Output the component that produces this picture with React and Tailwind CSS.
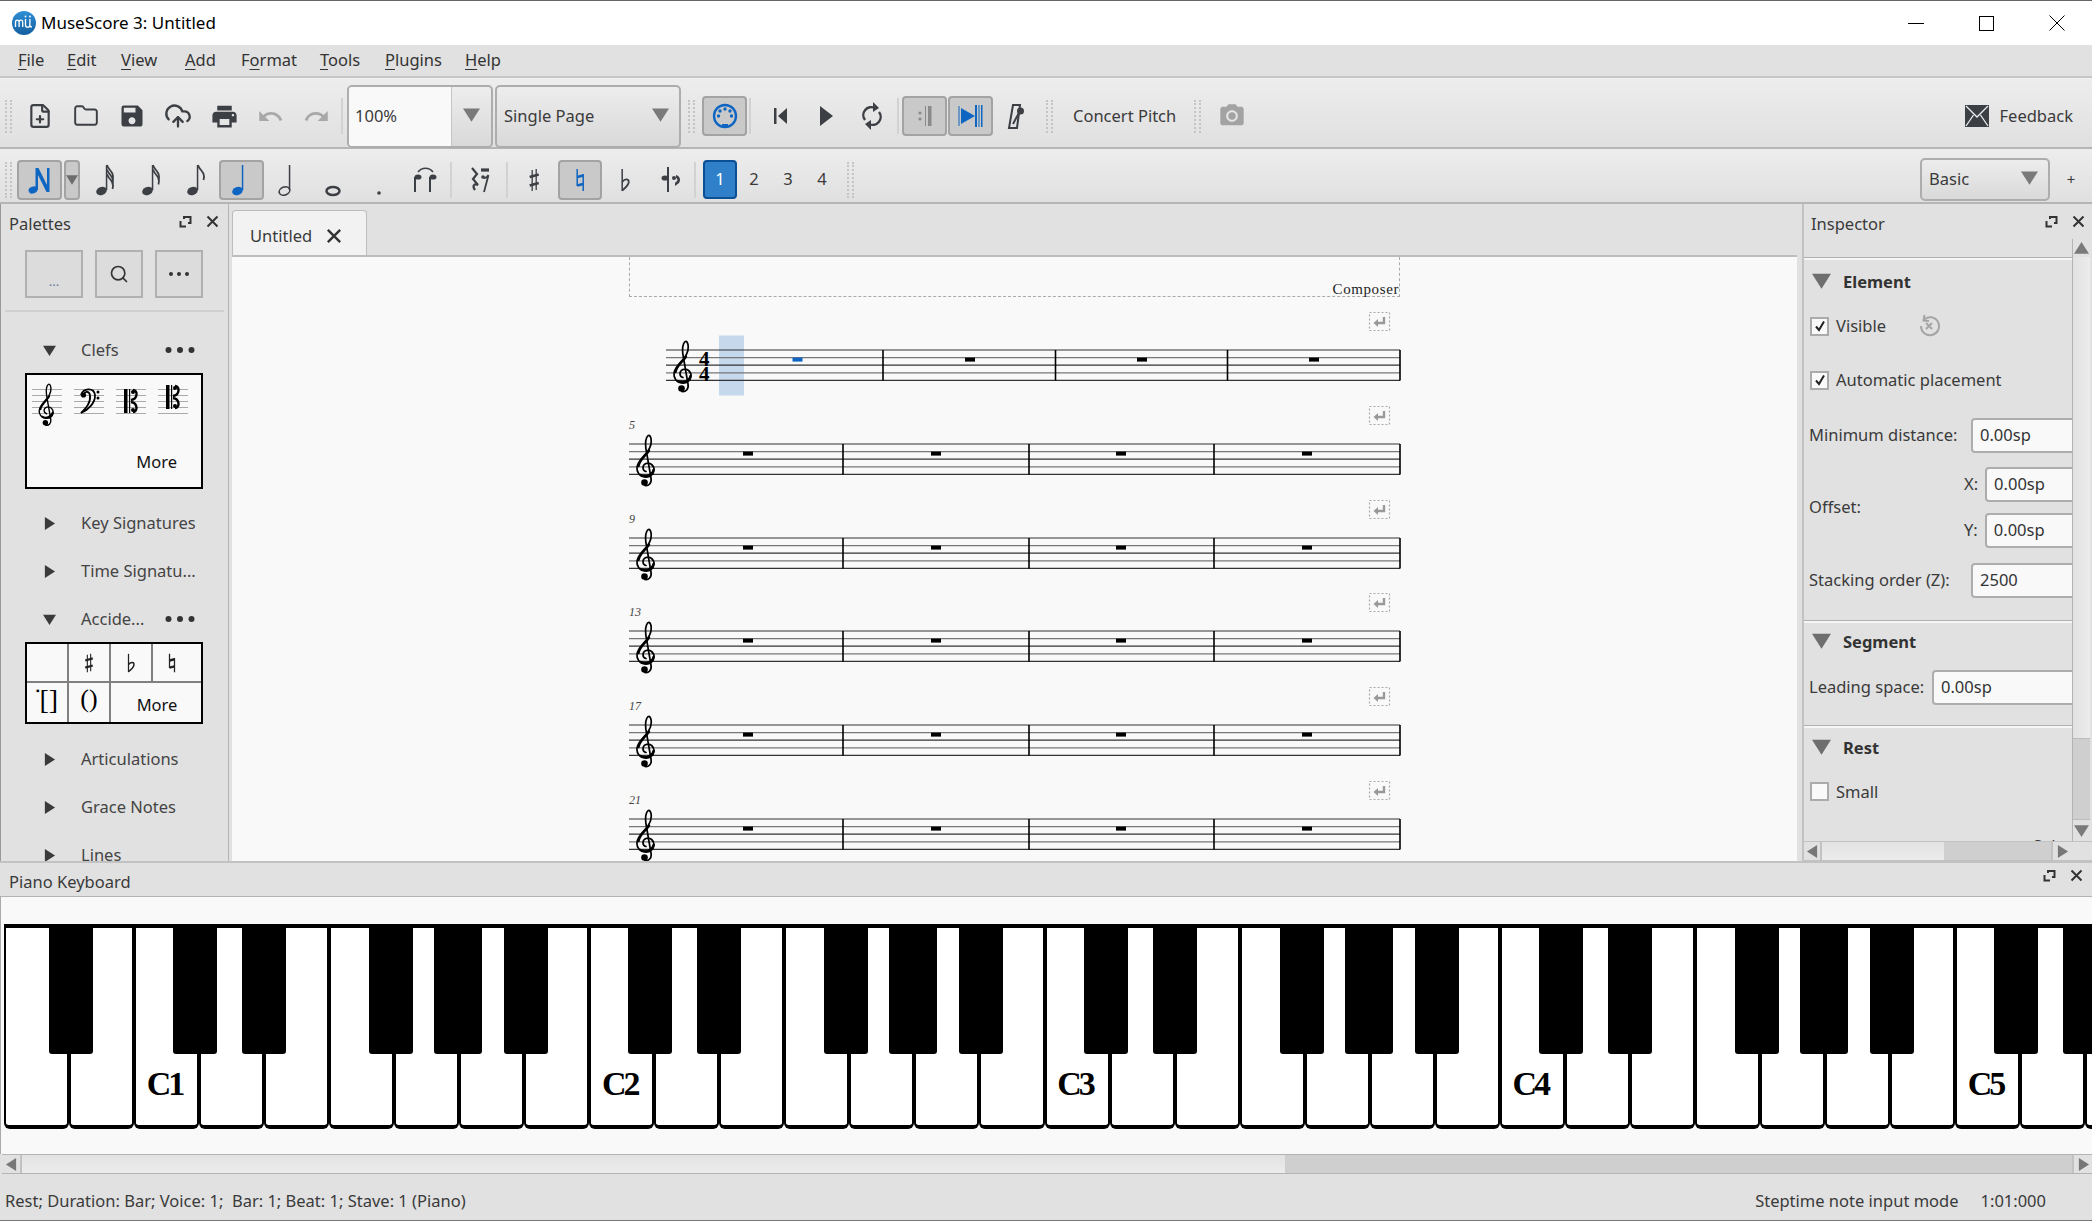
import React from 'react'
import { MdSave, MdPrint, MdUndo, MdRedo, MdPhotoCamera } from 'react-icons/md'
import { FilePlus, Folder, CloudUpload, Search } from 'lucide-react'

const DARK = '#3c3f44', BLUE = '#0f66c2'

// --- small drawings ---
function Float() {
  return <svg width="13" height="13" viewBox="0 0 13 13" fill="none" stroke="#333" strokeWidth="2"><path d="M5 4V2h6.500v6H9" /><path d="M1.500 6v5.500H7" /></svg>
}
function CloseX({ size = 13, w = 2 }) {
  return <svg width={size} height={size} viewBox="0 0 13 13" stroke="#333" strokeWidth={w}><path d="M1.500 1.500l10 10M11.500 1.500l-10 10" /></svg>
}
function Tri({ dir = 'down', size = 14, color = '#444' }) {
  const d = dir === 'down' ? 'M0 2h14L7 13z' : dir === 'right' ? 'M2 0l11 7-11 7z' : dir === 'left' ? 'M12 0L1 7l11 7z' : 'M0 12h14L7 1z'
  return <svg width={size} height={size} viewBox="0 0 14 14" fill={color}><path d={d} /></svg>
}
function Dots({ color = '#333' }) {
  return <svg width="30" height="8" viewBox="0 0 30 8" fill={color}><circle cx="3.500" cy="4" r="3" /><circle cx="15" cy="4" r="3" /><circle cx="26.500" cy="4" r="3" /></svg>
}
// treble clef, 20x53 box
function clefParts(x, y, s = 1, color = '#000') {
  return (
    <g transform={`translate(${x} ${y}) scale(${s})`} fill="none" stroke={color} strokeLinecap="round">
      <path strokeWidth="1.700" d="M10.500 37.500C6.500 36.500 6.500 31 10.500 29.500C15 28 19 32 18.500 36.500C18 41 14 43.500 9.500 43C4 42.500 1 38 1.500 33.500C2 27 9 22 12.500 17C15 13 16.500 9 15.500 4.500C14.500 .5 12.500 .5 11 4C9.500 8 10 13 11 18L15.500 44C16.500 49.500 13 52 9.500 51.500" />
      <path strokeWidth="2.400" d="M3 32C4 26 10 22 13.500 16.500M5 41C10 44 17 41 18 36" />
      <circle cx="9" cy="48.500" r="3.300" fill={color} stroke="none" />
    </g>
  )
}
function Staff5({ w = 30, gap = 6, y = 0, x = 0, color = '#aaa' }) {
  return [0, 1, 2, 3, 4].map(i => <line key={i} x1={x} x2={x + w} y1={y + i * gap + .5} y2={y + i * gap + .5} stroke={color} strokeWidth="1" />)
}
function MiniTreble() {
  return <svg width="30" height="44" viewBox="0 0 30 44"><Staff5 y={6} />{clefParts(6, 0, .82)}</svg>
}
function MiniBass() {
  return (
    <svg width="30" height="44" viewBox="0 0 30 44">
      <Staff5 y={6} />
      <path d="M7 12C9 5 20 4 21 12C21.500 20 14 27 7 30C12 25 17 20 16 12C15 8 11 8 10 11" fill="none" stroke="#000" strokeWidth="1.800" />
      <circle cx="9.500" cy="12" r="2.600" /><circle cx="24" cy="9" r="1.500" /><circle cx="24" cy="15" r="1.500" />
    </svg>
  )
}
function MiniAlto({ y = 6, top = 6 }) {
  return (
    <svg width="30" height="44" viewBox="0 0 30 44">
      <Staff5 y={y} />
      <rect x="8" y={top} width="3.500" height="24" /><rect x="13" y={top} width="1.200" height="24" />
      <path d={`M15 ${top + 11}C22 ${top + 10} 22 ${top + 1} 17 ${top + 1}M15 ${top + 13}C22 ${top + 14} 22 ${top + 23} 17 ${top + 23}`} fill="none" stroke="#000" strokeWidth="2.400" />
      <circle cx="17" cy={top + 3} r="2" /><circle cx="17" cy={top + 21} r="2" />
    </svg>
  )
}
function Sharp({ c = DARK, h = 24 }) {
  return <svg width={h * .6} height={h} viewBox="0 0 12 24" fill="none" stroke={c}><path strokeWidth="1.300" d="M4 2v21M8 1v21" /><path strokeWidth="2.800" d="M1.500 9L10.500 6.500M1.500 17.500L10.500 15" /></svg>
}
function Natural({ c = DARK, h = 24 }) {
  return <svg width={h * .6} height={h} viewBox="0 0 12 24" fill="none" stroke={c}><path strokeWidth="1.500" d="M3 1v17M9 6v17" /><path strokeWidth="2.800" d="M3 9L9 7.500M3 17.500L9 16" /></svg>
}
function Flat({ c = DARK, h = 24 }) {
  return <svg width={h * .6} height={h} viewBox="0 0 12 24" fill="none" stroke={c}><path strokeWidth="1.500" d="M3 1v22" /><path strokeWidth="1.800" d="M3 14C6 10 10 11 9.500 14.500C9 17.500 6 20 3 22.500" /></svg>
}
// flag count: 0 quarter, 1 eighth, 2 16th, 3 32nd
function Note({ flags = 0, c = DARK, hollow = false }) {
  return (
    <svg width="24" height="38" viewBox="0 0 24 38">
      <ellipse cx="7.500" cy="30" rx="5.500" ry="4" transform="rotate(-22 7.500 30)" fill={hollow ? 'none' : c} stroke={c} strokeWidth={hollow ? 1.600 : 0} />
      <rect x="11.800" y="4" width="1.500" height="25" fill={c} />
      {[...Array(flags)].map((_, i) => <path key={i} d={`M13 ${4 + i * 4.500}C14 ${9 + i * 4.500} 21 ${11 + i * 4.500} 18.500 ${19 + i * 4.500}`} fill="none" stroke={c} strokeWidth="1.800" />)}
    </svg>
  )
}
function Grip({ h = 'h-[33px]' }) {
  return <div className={`w-[7px] border-x-2 border-dotted border-[#c4c4c4] ${h}`} />
}
function Sep() {
  return <div className="w-[2px] h-[36px] bg-[#d2d2d2] mx-[2px]" />
}
function Slot({ children, className = 'w-[46px]' }) {
  return <div className={`flex items-center justify-center shrink-0 ${className}`}>{children}</div>
}
function Toggle({ children, className = 'w-[45px]' }) {
  return <div className={`flex items-center justify-center shrink-0 h-[40px] bg-[#c9c9c9] border-2 border-[#a3a3a3] rounded-[4px] ${className}`}>{children}</div>
}
function Combo({ label, className }) {
  return (
    <div className={`flex items-center h-[63px] border-2 border-[#adadad] rounded-[5px] bg-linear-to-b from-[#ededed] to-[#d9d9d9] ${className}`}>
      <span className="flex-1 pl-[7px] text-[#3a3a3a]">{label}</span>
      <span className="mr-[10px] mb-[4px]"><Tri size={17} color="#7a7a7a" /></span>
    </div>
  )
}

// --- score ---
function StaffSystem({ x = 0, bars, rests, num, first }) {
  const y = 40, g = 7.600
  return (
    <svg width="771" height="93.750" viewBox="0 0 771 93.750" className="block overflow-visible shrink-0">
      {first && <rect x="90" y={y - 14.500} width="25" height="60" fill="#c6d9ec" />}
      {[0, 1, 2, 3, 4].map(i => <line key={i} x1={x} x2="771" y1={y + i * g} y2={y + i * g} stroke={i % 2 ? '#777' : '#333'} strokeWidth="1.200" />)}
      {bars.map(b => <line key={b} x1={b} x2={b} y1={y} y2={y + 4 * g} stroke="#000" strokeWidth="1.600" />)}
      {rests.map((r, i) => <rect key={r} x={r - 5} y={y + g} width="10" height="4" fill={first && i === 0 ? BLUE : '#000'} />)}
      {clefParts(x + 6.500, y - 10, 1)}
      {first && <>
        <text x={70} y={y + 16} fontSize="21" className="font-['Liberation_Serif'] font-bold">4</text>
        <text x={70} y={y + 31} fontSize="21" className="font-['Liberation_Serif'] font-bold">4</text>
      </>}
      {num && <text x="0" y={y - 15} fontSize="12" fill="#444" className="font-['Liberation_Serif'] italic">{num}</text>}
      <g transform="translate(740 2)" fill="none">
        <rect x=".5" y=".5" width="20" height="18" stroke="#aaa" strokeWidth="1.200" strokeDasharray="2 2" />
        <path d="M15 5v6H7.500" stroke="#999" strokeWidth="2.400" />
        <path d="M9 7L4.500 11L9 15z" fill="#999" />
      </g>
    </svg>
  )
}

function Score() {
  const rest = { bars: [214, 400, 585, 771], rests: [119, 307, 492, 678] }
  return (
    <div className="flex-1 min-h-0 overflow-hidden bg-[#f9f9f9] pl-[397px]">
      <div className="w-[771px] h-[40px] border-x border-b border-dashed border-[#aaa] flex items-end justify-end font-['Liberation_Serif'] text-[15px] leading-[15px] tracking-[.6px] text-[#222]">
        <span className="-mb-[1px]">Composer</span>
      </div>
      <div className="mt-[13px] flex flex-col">
        <StaffSystem first x={37} bars={[254, 426.500, 598.500, 771]} rests={[168.500, 341, 513, 685]} />
        {['5', '9', '13', '17', '21'].map(n => <StaffSystem key={n} num={n} {...rest} />)}
      </div>
    </div>
  )
}

// --- palettes ---
function PalRow({ label, open, dots, children }) {
  return (
    <>
      <div className="flex items-center h-[48px] shrink-0 pl-[42px]">
        <span className="w-[38px] shrink-0"><Tri dir={open ? 'down' : 'right'} size={13} color="#3a3a3a" /></span>
        <span className={`text-[#444] whitespace-nowrap ${dots ? 'w-[84px]' : ''}`}>{label}</span>
        {dots && <Dots />}
      </div>
      {children}
    </>
  )
}
function Palettes() {
  const cell = 'flex items-center justify-center border-[#808080]'
  return (
    <div className="w-[229px] shrink-0 flex flex-col overflow-hidden border-x border-l-[#999] border-r-[#b4b4b4]">
      <div className="flex items-center justify-between h-[46px] pl-[8px] pr-[9px] pb-[5px] shrink-0">
        <span className="text-[#3a3a3a]">Palettes</span>
        <div className="flex items-center gap-[14px] mb-[6px]"><Float /><CloseX /></div>
      </div>
      <div className="flex pl-[24px] gap-[12px] shrink-0">
        <div className="w-[58px] h-[48px] border-2 border-[#b0b0b0] bg-[#dcdcdc] flex items-end justify-center text-[#66799a] text-[13px] pb-[8px] leading-none">...</div>
        <div className="w-[48px] h-[48px] border-2 border-[#b0b0b0] bg-[#dcdcdc] flex items-center justify-center"><Search size={20} color="#333" strokeWidth={2} /></div>
        <div className="w-[48px] h-[48px] border-2 border-[#b0b0b0] bg-[#dcdcdc] flex items-center justify-center"><svg width="22" height="6" fill="#333"><circle cx="3" cy="3" r="2" /><circle cx="11" cy="3" r="2" /><circle cx="19" cy="3" r="2" /></svg></div>
      </div>
      <div className="h-[2px] bg-[#cfcfcf] mx-[4px] mt-[12px] shrink-0" />
      <div className="mt-[14px]" />
      <PalRow label="Clefs" open dots>
        <div className="ml-[24px] w-[178px] h-[116px] -mt-[1px] border-2 border-black bg-[#f9f9f9] flex flex-col shrink-0">
          <div className="flex pl-[5px] gap-[12px] pt-[8px]"><MiniTreble /><MiniBass /><MiniAlto /><MiniAlto y={6} top={2} /></div>
          <div className="mt-[24px] text-right pr-[24px] text-[#111] leading-[22px]">More</div>
        </div>
      </PalRow>
      <div className="h-[10px] shrink-0" />
      <PalRow label="Key Signatures" />
      <PalRow label="Time Signatu..." />
      <PalRow label="Accide..." open dots>
        <div className="ml-[24px] w-[178px] h-[82px] -mt-[1px] border-2 border-black bg-[#f9f9f9] grid grid-cols-[42px_42px_42px_1fr] grid-rows-2 shrink-0">
          <div className={`${cell} border-r-2 border-b-2`} />
          <div className={`${cell} border-r-2 border-b-2`}><Sharp c="#222" h={20} /></div>
          <div className={`${cell} border-r-2 border-b-2`}><Flat c="#222" h={20} /></div>
          <div className={`${cell} border-b-2 pr-[10px]`}><Natural c="#222" h={20} /></div>
          <div className={`${cell} border-r-2 font-['Liberation_Serif'] text-[28px] leading-none text-black pb-[6px]`}><span className="text-[10px] self-start mt-[3px]">▪</span>[]</div>
          <div className={`${cell} border-r-2 font-['Liberation_Serif'] text-[26px] leading-none text-black pb-[8px]`}>()</div>
          <div className="col-span-2 flex items-center justify-center text-[#111] pl-[2px] pt-[5px]">More</div>
        </div>
      </PalRow>
      <div className="h-[11px] shrink-0" />
      <PalRow label="Articulations" />
      <PalRow label="Grace Notes" />
      <PalRow label="Lines" />
    </div>
  )
}

// --- inspector ---
function Check({ on, label }) {
  return (
    <div className="flex items-center gap-[7px] pl-[6px]">
      <div className="w-[19px] h-[19px] border-2 border-[#ababab] bg-[#f9f9f9] flex items-center justify-center">
        {on && <svg width="12" height="12" viewBox="0 0 12 12" fill="none" stroke="#222" strokeWidth="2"><path d="M2 6.500l3 3.500 5-8.500" /></svg>}
      </div>
      <span className="text-[#3a3a3a]">{label}</span>
    </div>
  )
}
function Field({ value, className = '' }) {
  return <div className={`h-[35px] shrink-0 border-2 border-[#adadad] rounded-[4px] bg-[#f9f9f9] flex items-center pl-[7px] text-[#333] ${className}`}>{value}</div>
}
function SectionHead({ label }) {
  return (
    <div className="flex items-center pl-[8px] h-[44px] shrink-0">
      <span className="w-[31px] mb-[4px]"><Tri size={19} color="#6e6e6e" /></span>
      <span className="font-bold text-[#333]">{label}</span>
    </div>
  )
}
function SecLine() {
  return <div className="h-[3px] shrink-0 border-t border-[#b0b0b0] bg-[#f5f5f5]" />
}
function Inspector() {
  return (
    <div className="w-[290px] shrink-0 flex flex-col overflow-hidden border-l-2 border-[#c2c2c2]">
      <div className="flex items-center justify-between h-[35px] pl-[7px] pr-[7px] shrink-0">
        <span className="text-[#3a3a3a] mt-[5px]">Inspector</span>
        <div className="flex items-center gap-[14px]"><Float /><CloseX /></div>
      </div>
      <div className="flex flex-1 min-h-0">
        <div className="flex-1 min-w-0 flex flex-col overflow-hidden">
          <div className="h-[18px] shrink-0" />
          <SecLine />
          <SectionHead label="Element" />
          <div className="mt-[10px] relative"><Check on label="Visible" />
            <svg className="absolute left-[113px] top-[0px]" width="24" height="24" viewBox="0 0 24 24" fill="none" stroke="#a5a5a5" strokeWidth="2"><path d="M7 5.500A9 9 0 1 1 4 12" /><path d="M7.500 1L6.500 6.500L12 7" /><path d="M9 9l6 6M15 9l-6 6" /></svg>
          </div>
          <div className="mt-[29px]"><Check on label="Automatic placement" /></div>
          <div className="flex items-center mt-[25px] pl-[5px] text-[#3a3a3a]"><span className="w-[162px] shrink-0">Minimum distance:</span><Field value="0.00sp" className="w-[120px]" /></div>
          <div className="flex items-center mt-[14px] pl-[5px] text-[#3a3a3a]">
            <span className="w-[155px] shrink-0">Offset:</span>
            <div className="flex flex-col gap-[11px]">
              <div className="flex items-center gap-[7px]"><span>X:</span><Field value="0.00sp" className="w-[110px] h-[34px]" /></div>
              <div className="flex items-center gap-[7px]"><span>Y:</span><Field value="0.00sp" className="w-[110px] h-[34px]" /></div>
            </div>
          </div>
          <div className="flex items-center mt-[15px] pl-[5px] text-[#3a3a3a]"><span className="w-[162px] shrink-0">Stacking order (Z):</span><Field value="2500" className="w-[120px]" /></div>
          <div className="h-[22px] shrink-0" />
          <SecLine />
          <div className="-mt-[2px]"><SectionHead label="Segment" /></div>
          <div className="flex items-center mt-[5px] pl-[5px] text-[#3a3a3a]"><span className="w-[123px] shrink-0">Leading space:</span><Field value="0.00sp" className="w-[160px]" /></div>
          <div className="h-[20px] shrink-0" />
          <SecLine />
          <div className="-mt-[1px]"><SectionHead label="Rest" /></div>
          <div className="mt-[9px]"><Check label="Small" /></div>
          <div className="mt-[30px] pl-[229px] text-[#3a3a3a] whitespace-nowrap">Select</div>
        </div>
        <div className="w-[18px] mr-[2px] shrink-0 flex flex-col border-l border-[#b4b4b4]">
          <div className="h-[18px] flex items-center justify-center shrink-0"><Tri dir="up" size={15} color="#7a7a7a" /></div>
          <div className="flex-1 bg-linear-to-r from-[#e2e2e2] to-[#ececec]" />
          <div className="h-[82px] bg-[#cfcfcf] border-y border-[#bcbcbc] shrink-0" />
          <div className="h-[21px] flex items-center justify-center shrink-0"><Tri size={15} color="#7a7a7a" /></div>
        </div>
      </div>
      <div className="flex h-[20px] shrink-0 border-y border-[#c2c2c2]">
        <div className="w-[18px] flex items-center justify-center border-r-2 border-[#c2c2c2]"><Tri dir="left" size={13} color="#777" /></div>
        <div className="w-[122px] bg-linear-to-b from-[#e2e2e2] to-[#ececec]" />
        <div className="w-[107px] bg-[#cfcfcf]" />
        <div className="w-[21px] flex items-center justify-center border-l-2 border-[#c2c2c2]"><Tri dir="right" size={13} color="#777" /></div>
      </div>
    </div>
  )
}

// --- keyboard ---
const KEY_W = 65.040
const OCT = [[41, 44], [110, 44], [237, 44], [302, 48], [372, 44]]
function Keyboard() {
  const blacks = []
  for (let o = -1; o < 5; o++) for (const [l, w] of OCT) blacks.push({ left: 128 + o * 7 * KEY_W + l, width: w })
  return (
    <div className="h-[258px] shrink-0 bg-[#f9f9f9] border-t border-[#b4b4b4] pt-[27px] pl-[3px] overflow-hidden border-l border-l-[#aaa]">
      <div className="relative flex h-[205px] w-[2152px] border-t-4 border-black">
        {[...Array(33)].map((_, i) => (
          <div key={i} className="w-[65.04px] shrink-0 bg-white border-x-2 border-b-4 border-black rounded-b-[6px] flex items-end justify-center pb-[24px] pr-[4px]">
            {(i - 2) % 7 === 0 && <span className="font-['Liberation_Serif'] font-bold text-[34px] leading-none tracking-[-3px] text-black">C{(i - 2) / 7 + 1}</span>}
          </div>
        ))}
        {blacks.filter(b => b.left > 0 && b.left < 2090).map(b => (
          <div key={b.left} className="absolute -top-[1px] h-[127px] bg-black rounded-b-[3px]" style={{ left: b.left, width: b.width }} />
        ))}
      </div>
    </div>
  )
}

// --- page ---
export default function App() {
  const menu = [['', 'F', 'ile', 'w-[49px]'], ['', 'E', 'dit', 'w-[54px]'], ['', 'V', 'iew', 'w-[64px]'], ['', 'A', 'dd', 'w-[56px]'], ['F', 'o', 'rmat', 'w-[79px]'], ['', 'T', 'ools', 'w-[65px]'], ['', 'P', 'lugins', 'w-[80px]'], ['', 'H', 'elp', 'w-[40px]']]
  return (
    <div className="w-[2092px] h-[1221px] flex flex-col overflow-hidden bg-[#e1e1e1] text-[16.5px] font-['Noto_Sans','Open_Sans',sans-serif] border-t border-[#666]">
      {/* title */}
      <div className="h-[44px] shrink-0 bg-white flex items-center pl-[12px]">
        <svg width="24" height="24" viewBox="0 0 24 24" className="mr-[5px]">
          <defs><linearGradient id="lg" x1="0" y1="0" x2="0" y2="1"><stop offset="0" stopColor="#2f8fd6" /><stop offset="1" stopColor="#155f9f" /></linearGradient></defs>
          <circle cx="12" cy="12" r="12" fill="url(#lg)" />
          <path d="M3.500 16v-5a1.800 1.800 0 0 1 3.600 0v5M7.100 11a1.800 1.800 0 0 1 3.600 0v5M13.500 8v6a2.200 2.200 0 0 0 4.400 0V8M17.900 14c0 1.500 .8 2 2 2" fill="none" stroke="#fff" strokeWidth="1.300" />
          <circle cx="13.500" cy="5.500" r=".9" fill="#fff" /><circle cx="18" cy="5.500" r=".9" fill="#fff" />
        </svg>
        <span className="text-[17px] text-black">MuseScore 3: Untitled</span>
        <div className="ml-auto flex items-center">
          <div className="w-[69px] flex justify-center"><div className="w-[16px] h-px bg-black" /></div>
          <div className="w-[72px] flex justify-center"><div className="w-[15px] h-[15px] border border-black" /></div>
          <div className="w-[70px] flex justify-center"><svg width="16" height="16" stroke="#000"><path d="M.5.5l15 15M15.500 .5l-15 15" /></svg></div>
        </div>
      </div>
      {/* menu */}
      <div className="h-[33px] shrink-0 flex items-center pl-[18px] border-b-2 border-[#c6c6c6] text-[#333]">
        {menu.map(([a, u, b, w]) => <span key={u + b} className={`shrink-0 ${w} pr-0`}>{a}<span className="underline underline-offset-3">{u}</span>{b}</span>)}
      </div>
      {/* toolbar 1 */}
      <div className="h-[71px] shrink-0 flex items-center pl-[5px] pt-[6px] bg-linear-to-b from-[#ededed] to-[#e0e0e0] border-b-2 border-[#b5b5b5] border-t border-t-[#f0f0f0] text-[#3a3a3a]">
        <Grip /><div className="w-[5px]" />
        <Slot><FilePlus size={26} color={DARK} strokeWidth={2} /></Slot>
        <Slot><Folder size={26} color={DARK} strokeWidth={1.800} /></Slot>
        <Slot><MdSave size={28} color={DARK} /></Slot>
        <Slot><CloudUpload size={28} color={DARK} strokeWidth={2} /></Slot>
        <Slot><MdPrint size={29} color={DARK} /></Slot>
        <Slot><MdUndo size={27} color="#a8a8a8" /></Slot>
        <Slot><MdRedo size={27} color="#a8a8a8" /></Slot>
        <Sep />
        <div className="flex items-center h-[63px] w-[146px] ml-[2px] border-2 border-[#adadad] rounded-[5px] overflow-hidden bg-linear-to-b from-[#ededed] to-[#d9d9d9] shrink-0">
          <div className="w-[103px] h-full bg-[#f9f9f9] flex items-center pl-[6px] border-r border-[#c6c6c6]">100%</div>
          <div className="flex-1 flex justify-center mb-[4px]"><Tri size={17} color="#7a7a7a" /></div>
        </div>
        <Combo label="Single Page" className="w-[186px] ml-[2px] shrink-0" />
        <div className="w-[7px]" /><Grip /><div className="w-[7px]" />
        <Toggle>
          <svg width="26" height="26" viewBox="0 0 26 26" fill="none"><circle cx="13" cy="13" r="11" stroke={BLUE} strokeWidth="2.400" /><path d="M10 24v-3h6v3z" fill={BLUE} />{[[6.500, 13], [19.500, 13], [8, 8], [18, 8], [13, 6]].map(([x, y]) => <circle key={x} cx={x} cy={y} r="1.700" fill={BLUE} />)}</svg>
        </Toggle>
        <Sep />
        <Slot className="w-[46px] ml-[4px]"><svg width="13" height="16" fill={DARK}><rect y="0" width="2.500" height="16" /><path d="M13 0v16L4 8z" /></svg></Slot>
        <Slot><svg width="14" height="20" fill={DARK}><path d="M1 0l13 10L1 20z" /></svg></Slot>
        <Slot><svg width="20" height="30" viewBox="0 0 20 30" fill="none" stroke={DARK} strokeWidth="2.400"><path d="M3 19A8 8 0 0 1 13 7M17 11A8 8 0 0 1 7 23" /><path d="M11 1l6 6-6 4z" fill={DARK} stroke="none" /><path d="M9 29l-6-6 6-4z" fill={DARK} stroke="none" /></svg></Slot>
        <div className="w-[2px] h-[36px] bg-[#d2d2d2] ml-[2px] mr-[3px]" />
        <Toggle><svg width="14" height="22" fill="#8a8a8a"><circle cx="2" cy="8" r="1.600" /><circle cx="2" cy="14" r="1.600" /><rect x="7" y="1" width="1" height="20" /><rect x="10" y="1" width="3.500" height="20" /></svg></Toggle>
        <Toggle className="w-[45px] ml-[1px]"><svg width="26" height="26" fill={BLUE}><path d="M3 5l14 8-14 8z" /><rect x="17" y="2" width="2" height="22" /><rect x="20.500" y="2" width="1" height="22" /><rect x="23" y="2" width="1.500" height="22" /><rect x=".5" y="3" width="1" height="20" /></svg></Toggle>
        <Slot><svg width="18" height="26" viewBox="0 0 18 26" fill="none" stroke={DARK} strokeWidth="2"><path d="M6 2h7l-3 23H2z" /><path d="M6 21L13 8" /><circle cx="13.500" cy="8" r="2.500" fill={DARK} /></svg></Slot>
        <div className="w-[7px]" /><Grip /><div className="w-[20px]" />
        <span className="w-[104px] shrink-0 whitespace-nowrap">Concert Pitch</span>
        <div className="w-[17px]" /><Grip /><div className="w-[8px]" />
        <Slot><MdPhotoCamera size={28} color="#a3a3a3" /></Slot>
        <div className="ml-auto flex items-center pr-[19px] gap-[11px]">
          <svg width="24" height="22" viewBox="0 0 24 22"><rect y="0" width="24" height="22" fill={DARK} /><path d="M1 1l11 11L23 1M1 21l7.500-11M23 21l-7.500-11" fill="none" stroke="#eee" strokeWidth="1.300" /></svg>
          <span>Feedback</span>
        </div>
      </div>
      {/* toolbar 2 */}
      <div className="h-[55px] shrink-0 flex items-center pl-[5px] pt-[8px] bg-linear-to-b from-[#ededed] to-[#e0e0e0] border-b-2 border-[#b5b5b5] text-[#3a3a3a]">
        <Grip h="h-[36px]" /><div className="w-[5px]" />
        <Toggle className="w-[45px]"><svg width="24" height="30" viewBox="0 0 24 30" fill={BLUE}><ellipse cx="5" cy="25" rx="4.500" ry="3.500" transform="rotate(-20 5 25)" /><path d="M7.500 25V3h3L19 20V3h2.500v24h-3L10 10v15z" /></svg></Toggle>
        <div className="w-[16px] h-[40px] ml-[2px] mr-[3px] bg-[#c9c9c9] border-2 border-[#a3a3a3] rounded-[4px] flex items-center justify-center shrink-0"><Tri size={15} color="#6e6e6e" /></div>
        <Slot><Note flags={3} /></Slot>
        <Slot><Note flags={2} /></Slot>
        <Slot className="w-[44px]"><Note flags={1} /></Slot>
        <Toggle><Note c={BLUE} /></Toggle>
        <Slot className="w-[46px] pl-[4px]"><Note hollow /></Slot>
        <Slot><svg width="20" height="38"><ellipse cx="10" cy="30" rx="6.500" ry="4" fill="none" stroke={DARK} strokeWidth="2.500" /></svg></Slot>
        <Slot><svg width="6" height="38"><circle cx="3" cy="32" r="1.800" fill={DARK} /></svg></Slot>
        <Slot><svg width="28" height="28" viewBox="0 0 28 28" fill="none"><path d="M7 6C11 1 18 1 22 6" stroke={DARK} strokeWidth="1.600" /><path d="M4 11v15M19 11v15" stroke={DARK} strokeWidth="2" /><ellipse cx="7" cy="11" rx="3.500" ry="2.600" fill={DARK} /><ellipse cx="22" cy="11" rx="3.500" ry="2.600" fill={DARK} /></svg></Slot>
        <Sep />
        <Slot className="w-[50px]"><svg width="22" height="26" viewBox="0 0 22 26" fill="none" stroke={DARK}><path d="M4 1l5 6-4 5 5 6c-4-2-6 1-3 5" strokeWidth="2.200" /><path d="M13 3h8" strokeWidth="3.200" /><circle cx="15" cy="10" r="1.800" fill={DARK} stroke="none" /><path d="M20.500 8c-1 2-3 3-5 3M20.500 8L16 25" strokeWidth="1.800" /></svg></Slot>
        <Sep />
        <Slot className="w-[48px]"><Sharp /></Slot>
        <Toggle className="w-[44px]"><Natural c={BLUE} /></Toggle>
        <Slot><Flat /></Slot>
        <Slot className="w-[44px] pl-[3px]"><svg width="24" height="30" viewBox="0 0 24 30" fill={DARK}><rect x="7" y="2" width="2" height="25" /><ellipse cx="5" cy="13" rx="3.500" ry="2.600" /><path d="M16 10c4 1 5 5 3 8l-4 3 0-3 2-2c1-1 0-3-1-3z" /><circle cx="14" cy="13" r="2" /></svg></Slot>
        <Sep />
        <div className="w-[34px] h-[39px] ml-[5px] shrink-0 bg-[#2f7fc9] border-2 border-[#0b4f94] rounded-[4px] flex items-center justify-center text-white">1</div>
        <Slot className="w-[34px]">2</Slot>
        <Slot className="w-[34px]">3</Slot>
        <Slot className="w-[34px]">4</Slot>
        <div className="w-[8px]" /><Grip h="h-[36px]" />
        <div className="ml-auto flex items-center">
          <Combo label="Basic" className="w-[130px] !h-[43px] shrink-0" />
          <span className="w-[42px] text-center text-[15px]">+</span>
        </div>
      </div>
      {/* main */}
      <div className="flex h-[659px] shrink-0 border-b-2 border-[#c2c2c2]">
        <Palettes />
        <div className="flex-1 min-w-0 flex flex-col pl-[3px] pr-[5px]">
          <div className="h-[53px] shrink-0 flex items-end border-b-2 border-[#bdbdbd]">
            <div className="w-[135px] h-[45px] bg-[#f2f2f2] border border-b-0 border-[#bdbdbd] rounded-t-[4px] flex items-center pl-[17px] pt-[6px] gap-[14px] text-[#3a3a3a]">
              <span>Untitled</span><CloseX size={16} />
            </div>
          </div>
          <Score />
        </div>
        <Inspector />
      </div>
      {/* piano */}
      <div className="h-[33px] shrink-0 flex items-center justify-between pl-[9px] pr-[9px] pt-[6px]">
        <span className="text-[#3a3a3a]">Piano Keyboard</span>
        <div className="flex items-center gap-[14px] mb-[14px]"><Float /><CloseX /></div>
      </div>
      <Keyboard />
      <div className="h-[20px] shrink-0 flex border-y border-[#b4b4b4] ml-[2px]">
        <div className="w-[20px] flex items-center justify-center border-r-2 border-[#c2c2c2]"><Tri dir="left" size={13} color="#777" /></div>
        <div className="w-[1263px] bg-linear-to-b from-[#e2e2e2] to-[#ececec]" />
        <div className="flex-1 bg-[#cfcfcf]" />
        <div className="w-[20px] flex items-center justify-center border-l-2 border-[#c2c2c2]"><Tri dir="right" size={13} color="#777" /></div>
      </div>
      {/* status */}
      <div className="flex-1 flex items-center pl-[5px] pr-[46px] pt-[9px] text-[#3a3a3a] border-b border-[#777]">
        <span>Rest; Duration: Bar; Voice: 1;&nbsp; Bar: 1; Beat: 1; Stave: 1 (Piano)</span>
        <span className="ml-auto mr-[22px]">Steptime note input mode</span>
        <span>1:01:000</span>
      </div>
    </div>
  )
}
